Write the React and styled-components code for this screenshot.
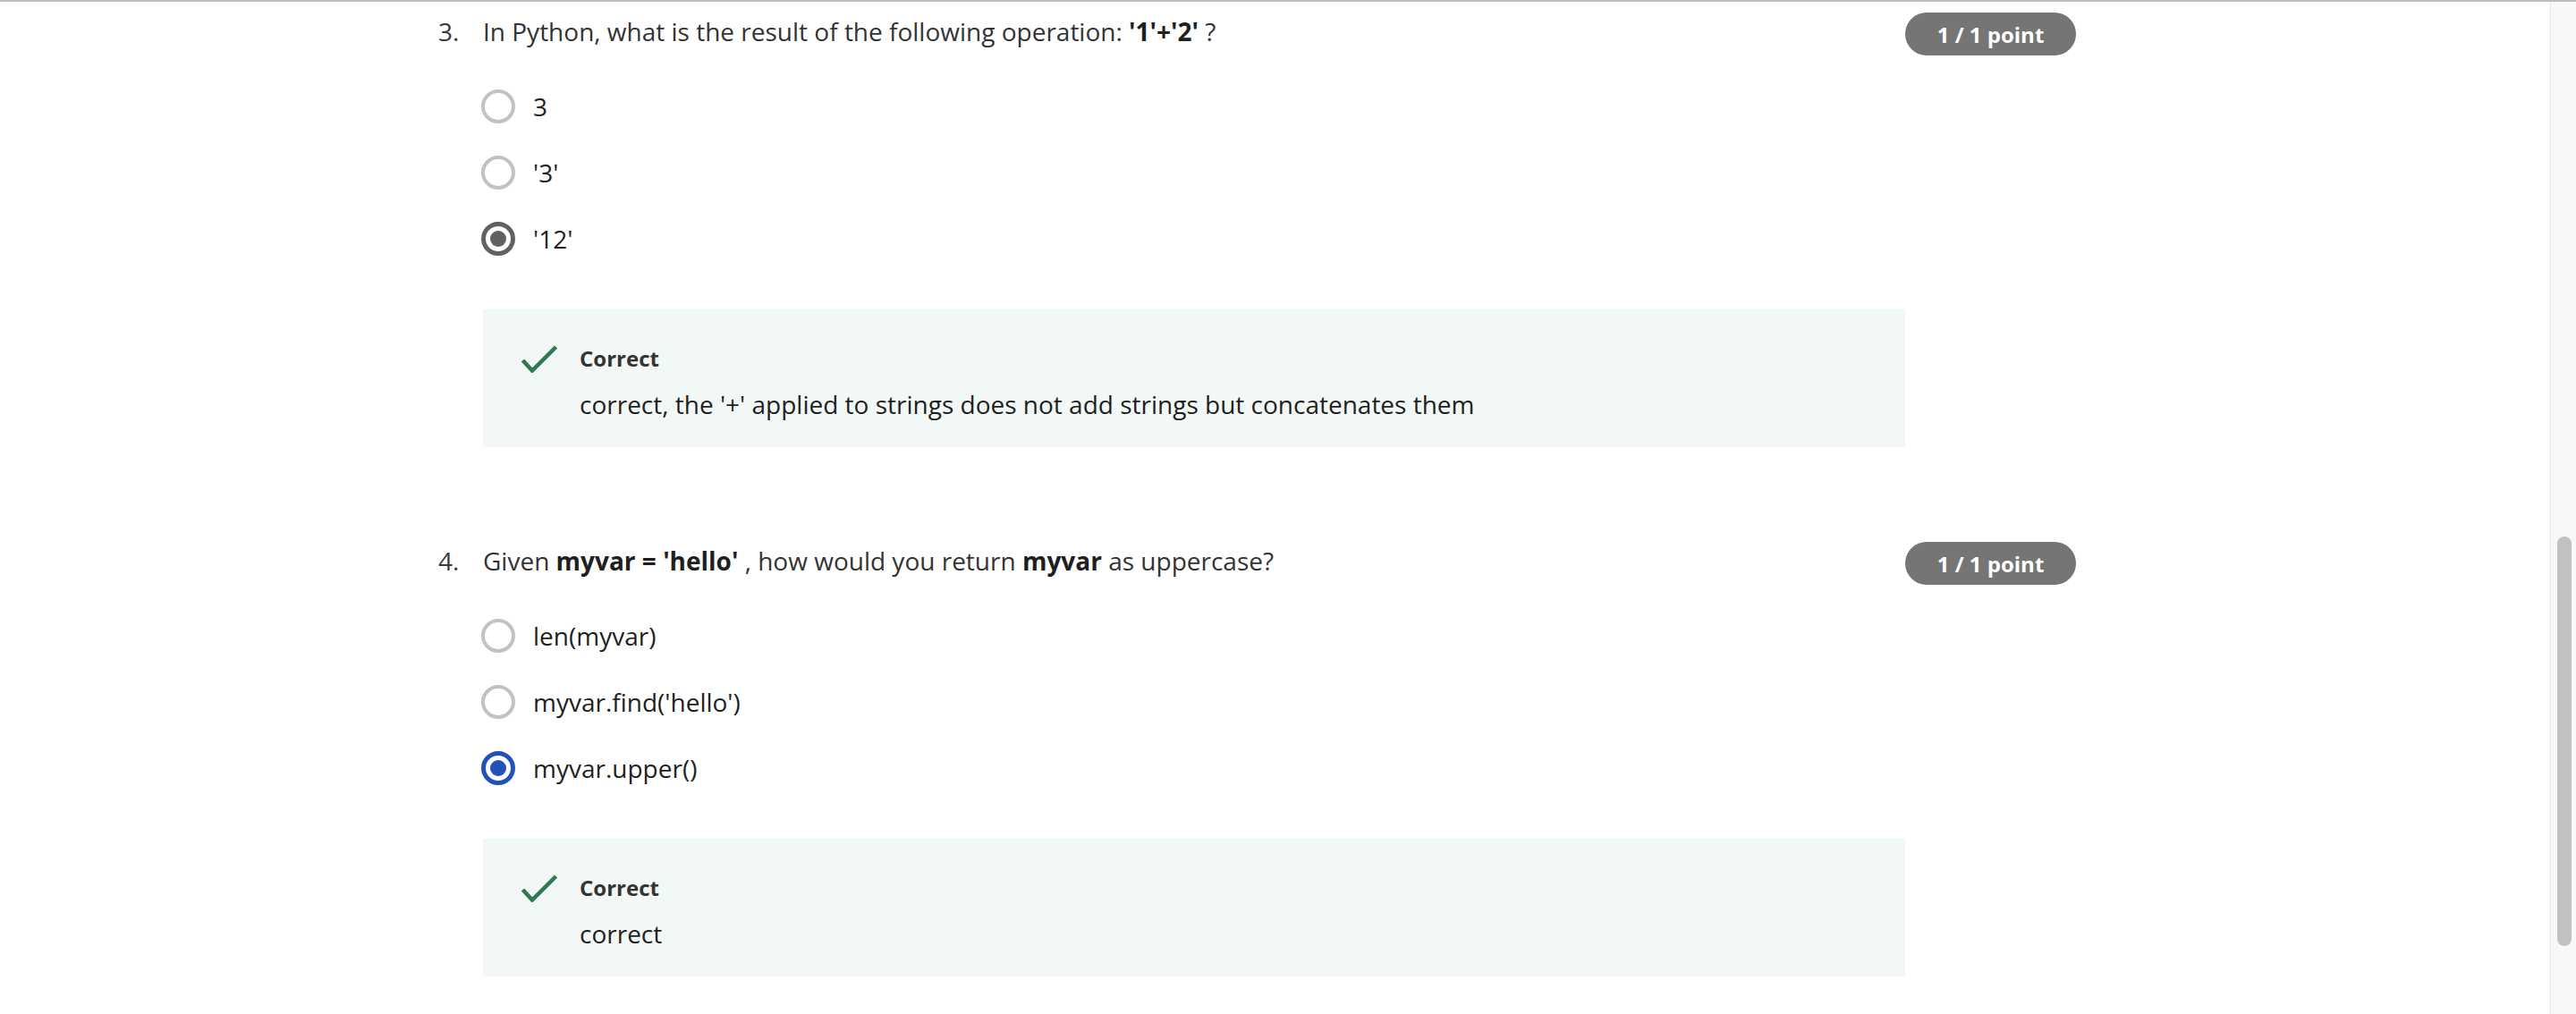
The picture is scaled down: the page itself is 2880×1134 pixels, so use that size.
import React from 'react'
import styled, { createGlobalStyle } from 'styled-components'

const GlobalStyle = createGlobalStyle`
  html, body {
    margin: 0;
    padding: 0;
    background: #ffffff;
    overflow: hidden;
  }
  body {
    font-family: "Open Sans", "Noto Sans", sans-serif;
    color: #333333;
  }
`;

const Page = styled.div`
  width: 2880px;
  height: 1134px;
  display: flex;
  flex-direction: column;
  overflow: hidden;
`;

const TopLine = styled.div`
  height: 2px;
  background: #bcbcbc;
  flex-shrink: 0;
`;

const Body = styled.div`
  flex: 1;
  display: flex;
  min-height: 0;
`;

const Main = styled.div`
  flex: 1;
  padding: 12px 0 0 490px;
  overflow: hidden;
`;

const ScrollTrack = styled.div`
  width: 29px;
  border-left: 1px solid #e6e6e6;
  background: #f8f8f8;
  padding-left: 7px;
  box-sizing: border-box;
  flex-shrink: 0;
`;

const ScrollThumb = styled.div`
  width: 16px;
  height: 458px;
  margin-top: 598px;
  border-radius: 8px;
  background: #c1c1c1;
`;

const Question = styled.section`
  display: flex;
  flex-direction: column;
  margin-bottom: 106px;
`;

const Header = styled.div`
  display: flex;
  align-items: flex-start;
  height: 48px;
`;

const Number = styled.div`
  width: 50px;
  font-size: 28px;
  line-height: 42px;
  color: #3a3a3a;
`;

const Prompt = styled.div`
  width: 1590px;
  font-size: 28px;
  line-height: 42px;
  color: #333333;

  b {
    font-weight: 700;
    color: #1f1f1f;
  }
`;

const Badge = styled.div`
  width: 191px;
  height: 48px;
  border-radius: 24px;
  background: #757575;
  color: #ffffff;
  font-size: 24px;
  font-weight: 700;
  display: flex;
  align-items: center;
  justify-content: center;
`;

const Options = styled.div`
  display: flex;
  flex-direction: column;
  gap: 32px;
  margin: 36px 0 0 48px;
`;

const Option = styled.label`
  display: flex;
  align-items: center;
  gap: 20px;
  height: 42px;
  font-size: 28px;
  line-height: 42px;
  color: #1f1f1f;
`;

const Radio = styled.span`
  width: 38px;
  height: 38px;
  box-sizing: border-box;
  border-radius: 50%;
  border: ${p => (p.$checked ? '5px' : '4px')} solid ${p => (p.$checked ? p.$color : '#c2c2c2')};
  display: flex;
  align-items: center;
  justify-content: center;
  flex-shrink: 0;

  &::after {
    content: '';
    display: ${p => (p.$checked ? 'block' : 'none')};
    width: 18px;
    height: 18px;
    border-radius: 50%;
    background: ${p => p.$color};
  }
`;

const Feedback = styled.div`
  width: 1590px;
  height: 154px;
  box-sizing: border-box;
  margin: 58px 0 0 50px;
  padding: 37px 0 0 43px;
  background: #f2f8f6;
  display: flex;
  gap: 25px;
`;

const CheckIcon = styled.svg`
  width: 40px;
  height: 31px;
  margin-top: 3px;
  flex-shrink: 0;
`;

const FeedbackText = styled.div`
  display: flex;
  flex-direction: column;
  gap: 12px;
`;

const FeedbackTitle = styled.div`
  font-size: 24px;
  line-height: 36px;
  font-weight: 700;
  color: #333333;
`;

const FeedbackBody = styled.div`
  font-size: 28px;
  line-height: 42px;
  color: #1f1f1f;
`;

const questions = [
  {
    num: '3.',
    prompt: (
      <>
        In Python, what is the result of the following operation: <b>'1'+'2'</b> ?
      </>
    ),
    options: ['3', "'3'", "'12'"],
    picked: 2,
    color: '#616161',
    feedback: "correct, the '+' applied to strings does not add strings but concatenates them",
  },
  {
    num: '4.',
    prompt: (
      <>
        Given <b>myvar = 'hello'</b> , how would you return <b>myvar</b> as uppercase?
      </>
    ),
    options: ['len(myvar)', "myvar.find('hello')", 'myvar.upper()'],
    picked: 2,
    color: '#2052b8',
    feedback: 'correct',
  },
];

const App = () => {
  return (
    <>
      <GlobalStyle />
      <Page>
        <TopLine />
        <Body>
          <Main>
            {questions.map(q => (
              <Question key={q.num}>
                <Header>
                  <Number>{q.num}</Number>
                  <Prompt>{q.prompt}</Prompt>
                  <Badge>1 / 1 point</Badge>
                </Header>
                <Options>
                  {q.options.map((o, i) => (
                    <Option key={o}>
                      <Radio $checked={i === q.picked} $color={q.color} />
                      {o}
                    </Option>
                  ))}
                </Options>
                <Feedback>
                  <CheckIcon viewBox="0 0 40 31">
                    <polyline
                      points="1.5,17 12,28.5 38.5,2"
                      fill="none"
                      stroke="#2e7a50"
                      strokeWidth="4.5"
                    />
                  </CheckIcon>
                  <FeedbackText>
                    <FeedbackTitle>Correct</FeedbackTitle>
                    <FeedbackBody>{q.feedback}</FeedbackBody>
                  </FeedbackText>
                </Feedback>
              </Question>
            ))}
          </Main>
          <ScrollTrack>
            <ScrollThumb />
          </ScrollTrack>
        </Body>
      </Page>
    </>
  )
}

export default App
